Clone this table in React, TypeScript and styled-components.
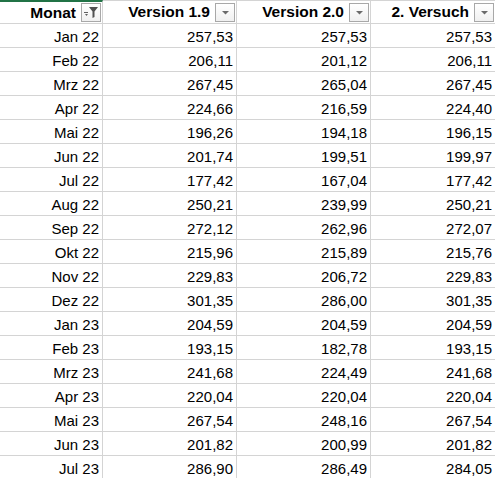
import React from 'react';
import styled, { createGlobalStyle } from 'styled-components';

const GlobalStyle = createGlobalStyle`
  html, body {
    margin: 0;
    padding: 0;
    background: #ffffff;
    overflow: hidden;
  }
`;

const rows: [string, string, string, string][] = [
  ['Jan 22', '257,53', '257,53', '257,53'],
  ['Feb 22', '206,11', '201,12', '206,11'],
  ['Mrz 22', '267,45', '265,04', '267,45'],
  ['Apr 22', '224,66', '216,59', '224,40'],
  ['Mai 22', '196,26', '194,18', '196,15'],
  ['Jun 22', '201,74', '199,51', '199,97'],
  ['Jul 22', '177,42', '167,04', '177,42'],
  ['Aug 22', '250,21', '239,99', '250,21'],
  ['Sep 22', '272,12', '262,96', '272,07'],
  ['Okt 22', '215,96', '215,89', '215,76'],
  ['Nov 22', '229,83', '206,72', '229,83'],
  ['Dez 22', '301,35', '286,00', '301,35'],
  ['Jan 23', '204,59', '204,59', '204,59'],
  ['Feb 23', '193,15', '182,78', '193,15'],
  ['Mrz 23', '241,68', '224,49', '241,68'],
  ['Apr 23', '220,04', '220,04', '220,04'],
  ['Mai 23', '267,54', '248,16', '267,54'],
  ['Jun 23', '201,82', '200,99', '201,82'],
  ['Jul 23', '286,90', '286,49', '284,05'],
];

const headers = ['Monat', 'Version 1.9', 'Version 2.0', '2. Versuch'];

const Sheet = styled.div`
  display: grid;
  grid-template-columns: 103px 134px 134px 125px;
  grid-auto-rows: 24px;
  width: 496px;
  font-family: "Liberation Sans", Arial, sans-serif;
  font-size: 15px;
  color: #000000;
`;

const HeadCell = styled.div<{ $active?: boolean }>`
  display: flex;
  align-items: center;
  justify-content: flex-end;
  gap: 5px;
  padding-right: 1px;
  font-weight: 700;
  font-size: 15.5px;
  box-sizing: border-box;
  border-right: 1px solid #d4d4d4;
  border-bottom: 1px solid #d4d4d4;
  border-top: ${p => (p.$active ? '2px solid #217346' : '1px solid #d4d4d4')};
`;

const Cell = styled.div`
  display: flex;
  align-items: center;
  justify-content: flex-end;
  padding: 1px 3px 0 0;
  box-sizing: border-box;
  border-right: 1px solid #d4d4d4;
  border-bottom: 1px solid #d4d4d4;
`;

const FilterButton = styled.div`
  width: 20px;
  height: 19px;
  box-sizing: border-box;
  border: 1px solid #a8a8a8;
  background: linear-gradient(#ffffff, #f0f0f0);
  display: flex;
  align-items: center;
  justify-content: center;
  flex-shrink: 0;
`;

const DropIcon = () => (
  <svg width="9" height="5" viewBox="0 0 9 5">
    <polygon points="1,1 8,1 4.5,4.5" fill="#6a6a6a" />
  </svg>
);

const FunnelIcon = () => (
  <svg width="18" height="17" viewBox="0 0 18 17">
    <polygon points="7,3 16,3 12.5,7.5 12.5,13 10.5,14 10.5,7.5" fill="#505050" />
    <rect x="2" y="8" width="4" height="1" fill="#606060" />
    <polygon points="3,10 6,10 4.5,12" fill="#606060" />
  </svg>
);

export default function App() {
  return (
    <>
      <GlobalStyle />
      <Sheet>
        {headers.map((h, i) => (
          <HeadCell key={h} $active={i === 0}>
            <span>{h}</span>
            <FilterButton>{i === 0 ? <FunnelIcon /> : <DropIcon />}</FilterButton>
          </HeadCell>
        ))}
        {rows.map(r =>
          r.map((v, i) => <Cell key={r[0] + i}>{v}</Cell>)
        )}
      </Sheet>
    </>
  );
}
